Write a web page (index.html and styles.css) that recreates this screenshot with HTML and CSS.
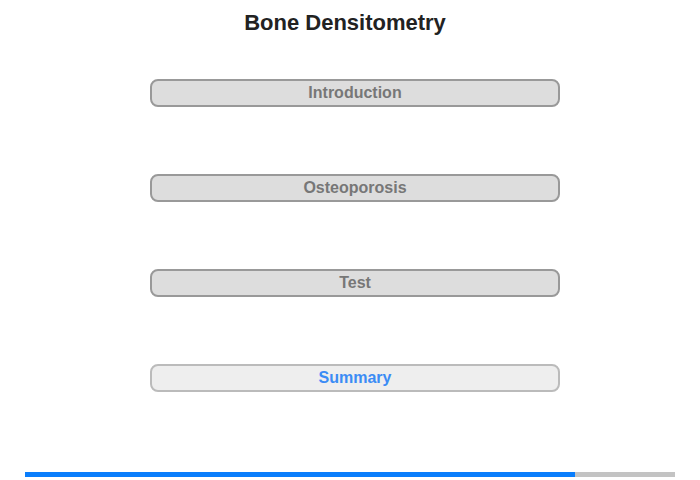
FILE: index.html
```html
<!DOCTYPE html>
<html>
<head>
<meta charset="utf-8">
<link rel="stylesheet" href="styles.css">
</head>
<body>
<div class="page">
  <h1 class="title">Bone Densitometry</h1>
  <div class="menu">
    <div class="btn">Introduction</div>
    <div class="btn">Osteoporosis</div>
    <div class="btn">Test</div>
    <div class="btn btn-active">Summary</div>
  </div>
  <div class="progress"><div class="progress-fill" style="width:550px"></div></div>
</div>
</body>
</html>
```
FILE: styles.css
```css
html, body {
  margin: 0;
  padding: 0;
  background: #fff;
}
.page {
  width: 700px;
  height: 480px;
  display: flex;
  flex-direction: column;
  font-family: "Liberation Sans", Arial, sans-serif;
}
.title {
  margin: 0;
  padding-top: 10px;
  padding-right: 10px;
  font-size: 22px;
  line-height: 25px;
  font-weight: bold;
  color: #222;
  text-align: center;
}
.menu {
  margin-top: 44px;
  padding-left: 150px;
  display: flex;
  flex-direction: column;
  gap: 67px;
}
.btn {
  box-sizing: border-box;
  width: 410px;
  height: 28px;
  border: 2px solid #999;
  border-radius: 8px;
  background: #ddd;
  color: #777;
  font-size: 16px;
  font-weight: bold;
  line-height: 22px;
  padding-top: 1px;
  padding-bottom: 1px;
  text-align: center;
}
.btn-active {
  background: #eee;
  border-color: #bbb;
  color: #3b8cf5;
}
.progress {
  margin-top: 80px;
  margin-left: 25px;
  width: 650px;
  height: 5px;
  background: #c3c3c3;
}
.progress-fill {
  height: 100%;
  background: #0a7efc;
}
```
